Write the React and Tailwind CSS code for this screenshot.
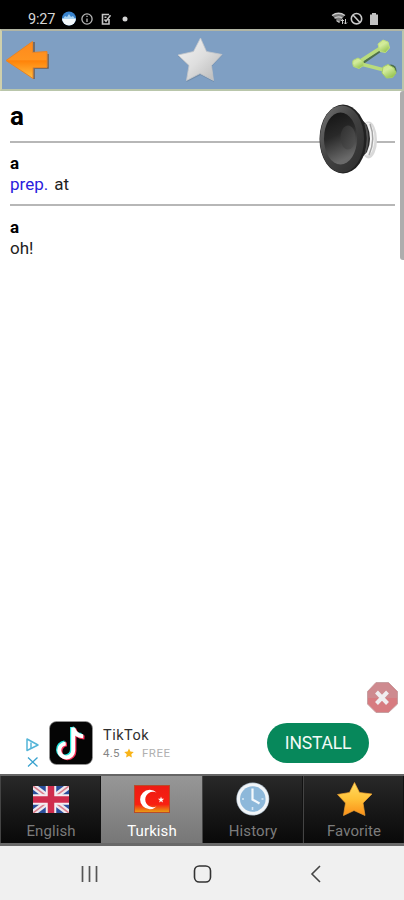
import { useState } from "react";

const BackArrow = () => (
  <svg width="46" height="42" viewBox="4 39 46 42">
    <defs>
      <linearGradient id="arrow" x1="0" y1="0" x2="0" y2="1">
        <stop offset="0" stopColor="#ff8a1c" />
        <stop offset="0.5" stopColor="#ff9420" />
        <stop offset="0.52" stopColor="#ff8208" />
        <stop offset="1" stopColor="#ffc044" />
      </linearGradient>
    </defs>
    <path d="M34 42v37M48 54v14H35" stroke="#6d5d50" strokeWidth="1.5" fill="none" />
    <path
      d="M6 60.5L32.5 41.5V52.5L47 51.5V67.5H33V78.5Z"
      fill="url(#arrow)"
      stroke="#e98425"
      strokeWidth="1"
      strokeLinejoin="round"
    />
  </svg>
);

const SilverStar = () => (
  <svg width="48" height="48" viewBox="177 36 48 48">
    <defs>
      <linearGradient id="silver" x1="0" y1="0" x2="1" y2="1">
        <stop offset="0" stopColor="#f4f4f4" />
        <stop offset="0.5" stopColor="#dedede" />
        <stop offset="1" stopColor="#b4b4b4" />
      </linearGradient>
    </defs>
    <path
      d="M202 39L208 52.5L223.5 55L213 66L215 82L201.5 75L187.5 82L190 66L179 56L195 52.5Z"
      fill="#627991"
      opacity="0.5"
    />
    <path
      d="M201.5 38L207.5 51.5L223 54.5L212.5 65.5L214.5 80.5L201 73.5L187.5 80.5L190 65.5L179 55L194.5 51.5Z"
      fill="url(#silver)"
      stroke="#c4c7ca"
      strokeWidth="0.8"
      strokeLinejoin="round"
    />
  </svg>
);

const ShareIcon = () => (
  <svg width="48" height="42" viewBox="350 39 48 42">
    <defs>
      <linearGradient id="green" x1="0" y1="0" x2="0.6" y2="1">
        <stop offset="0" stopColor="#cfe884" />
        <stop offset="0.45" stopColor="#d2eb9c" />
        <stop offset="1" stopColor="#98c552" />
      </linearGradient>
    </defs>
    <path d="M362 63.5L380 51" stroke="#4e6f4c" strokeWidth="2.5" />
    <ellipse cx="391" cy="70.5" rx="5.5" ry="6" fill="#4e6f4c" />
    <path d="M358 62.5L382 47M359 63.5L388 71" stroke="#b9dc7c" strokeWidth="3.6" />
    <path
      d="M378 44l5-4 5 2 1.5 6-4 4.5-5.5-1Z"
      fill="url(#green)"
      stroke="#bfe080"
      strokeLinejoin="round"
    />
    <path
      d="M353 60.5l5-2.5 5 3 .5 4.5-4.5 3-5.5-2-.8-3Z"
      fill="url(#green)"
      stroke="#b5d873"
      strokeLinejoin="round"
    />
    <path
      d="M383 67l5-2.5 6 3.5 2 5-3.5 4.5-6 .5-4.5-5Z"
      fill="url(#green)"
      stroke="#a9d065"
      strokeLinejoin="round"
    />
  </svg>
);

const Speaker = () => (
  <svg width="64" height="76" viewBox="316 101 64 76">
    <defs>
      <linearGradient id="rim" x1="0" y1="0" x2="1" y2="1">
        <stop offset="0" stopColor="#777" />
        <stop offset="0.45" stopColor="#434343" />
        <stop offset="1" stopColor="#2c2c2c" />
      </linearGradient>
      <linearGradient id="cone" x1="0" y1="0" x2="0.3" y2="1">
        <stop offset="0" stopColor="#121212" />
        <stop offset="0.5" stopColor="#292929" />
        <stop offset="1" stopColor="#6a6a6a" />
      </linearGradient>
      <linearGradient id="cap" x1="0" y1="0" x2="1" y2="1">
        <stop offset="0" stopColor="#2e2e2e" />
        <stop offset="1" stopColor="#555" />
      </linearGradient>
    </defs>
    <ellipse cx="368.5" cy="140" rx="8.5" ry="18.5" fill="#d9d9d9" />
    <ellipse cx="367" cy="139" rx="7.5" ry="16.5" fill="#f4f4f4" />
    <path d="M370 124Q376 139 369 155" fill="none" stroke="#a5a5a5" strokeWidth="1.5" />
    <path d="M357 114L367 125Q373 139 367 152L354 166Z" fill="#292929" />
    <path d="M365 124Q370 138 365 153" fill="none" stroke="#505050" strokeWidth="2" />
    <ellipse cx="343" cy="139" rx="23.5" ry="34.5" fill="#202020" />
    <ellipse cx="342" cy="139" rx="22" ry="33.5" fill="url(#rim)" />
    <ellipse cx="340.5" cy="138.5" rx="16.5" ry="26" fill="url(#cone)" />
    <ellipse cx="348" cy="137.5" rx="7.5" ry="12" fill="url(#cap)" />
  </svg>
);

const StatusBar = () => (
  <div className="flex h-[29px] items-center bg-black pt-[8px] pl-[28px] text-[14.5px] leading-none text-[#d6d6d6]">
    <span className="w-[28px] pt-[3px] tracking-[-0.2px]">9:27</span>
    <svg className="ml-[5px]" width="68" height="16" viewBox="61 11 68 16">
      <circle cx="69" cy="18.5" r="7" fill="#3883ce" />
      <path d="M62 18.5H76A7 7 0 0 1 62 18.5Z" fill="#f3f8fb" />
      <path d="M63 19l2-3 2 1 2-3 2 3 2-1 2 3Z" fill="#a7d3f3" />
      <circle cx="87" cy="19" r="5.1" fill="none" stroke="#b8b8b8" strokeWidth="1.3" />
      <path d="M87 18.5v3.5M87 15.8v1.3" stroke="#b8b8b8" strokeWidth="1.3" />
      <path
        d="M109 14.5H102.5V24H109V19M104.5 17.3h2M104.5 19.5l1.5 1.8 4.5-6"
        fill="none"
        stroke="#c6c6c6"
        strokeWidth="1.6"
      />
      <circle cx="125" cy="19" r="2.5" fill="#d4d4d4" />
    </svg>
    <svg className="mr-[23px] ml-auto" width="50" height="16" viewBox="331 11 50 16">
      <path d="M332 15.5Q338 11.5 344.5 15.5L339.5 22.5Z" fill="#777" />
      <path
        d="M332 15.5Q338.5 11 345 15.5M334.5 18.3Q338.5 15.5 342 18M336.5 20.5L339.5 22.5"
        fill="none"
        stroke="#ccc"
        strokeWidth="1.3"
      />
      <path
        d="M342.5 24V19.5M341 21l1.5-1.5 1.5 1.5M345.5 19v5M344 22.5l1.5 1.5 1.5-1.5"
        fill="none"
        stroke="#ccc"
      />
      <circle cx="356.5" cy="18.7" r="5.2" fill="none" stroke="#c8c8c8" strokeWidth="1.6" />
      <path d="M353 15L360 22.5" stroke="#c8c8c8" strokeWidth="1.6" />
      <path d="M370 14.5h2V13h4v1.5h2V25h-8Z" fill="#c2c2c2" />
    </svg>
  </div>
);

const TikTokLogo = () => (
  <svg width="44" height="44" viewBox="49 721 44 44">
    <rect x="49.5" y="721.5" width="43" height="43" rx="7" fill="#050505" stroke="#999" strokeWidth="0.7" />
    <g fill="none" strokeWidth="4">
      <path d="M72 727V749.5A7 7 0 1 1 64.500 742.5M72 727Q74 734.5 81.5 735" stroke="#25e6df" />
      <path d="M74.4 728.5V751.3A7 7 0 1 1 66.900 744.3M74.4 729Q76 737 84.5 737.5" stroke="#fa2f58" />
      <path d="M73.2 727.5V750.4A7 7 0 1 1 65.700 743.4M73.2 728Q75 735.8 83.2 736.3" stroke="#fff" />
    </g>
  </svg>
);

const AdBanner = () => (
  <div className="flex h-[57px] items-start bg-white">
    <svg className="mt-[20px] ml-[24px]" width="16" height="31" viewBox="24 738 16 31">
      <path d="M27 740V751.5L38 746Z" fill="none" stroke="#54b5d8" strokeWidth="1.5" strokeLinejoin="round" />
      <path d="M31 743.5v5.5" stroke="#54b5d8" strokeWidth="1.5" />
      <path d="M28 758.5l9.5 9M37.5 758.5l-9.5 9" stroke="#3aa2cf" strokeWidth="1.3" />
    </svg>
    <div className="mt-[4px] ml-[9px] h-[44px]">
      <TikTokLogo />
    </div>
    <div className="mt-[10px] ml-[10px]">
      <div className="text-[14.5px] leading-[17px] tracking-[0.5px] text-[#303030]">TikTok</div>
      <div className="mt-[2px] flex items-center text-[11.5px] leading-[14px] text-[#858585]">
        <span className="w-[17px] tracking-[0.2px]">4.5</span>
        <svg className="ml-[4px]" width="10" height="10" viewBox="0 0 24 24" fill="#f9b418">
          <path d="M12 1l3.4 7.5L23.5 9.5l-6 5.5L19 23l-7-4-7 4 1.5-8-6-5.5 8.1-1Z" />
        </svg>
        <span className="ml-[8px] tracking-[0.5px] text-[#b0b0b0]">FREE</span>
      </div>
    </div>
    <button className="mt-[6px] mr-[35px] ml-auto h-[40px] w-[102px] rounded-full bg-[#07885b] text-[17.5px] tracking-[-0.2px] text-[#f3faf6]">
      INSTALL
    </button>
  </div>
);

const UkFlag = () => (
  <svg width="38" height="38" viewBox="32 780 38 38">
    <svg x="33" y="786" width="36" height="27" viewBox="0 0 36 27">
      <path d="M0 0H36V27H0Z" fill="#2a4f9c" />
      <path d="M0 0L36 27M36 0L0 27" stroke="#eee9ef" strokeWidth="6" />
      <path d="M0 0L36 27M36 0L0 27" stroke="#dd7f8d" strokeWidth="1.6" />
      <path d="M18 0V27M0 13.5H36" stroke="#f4edf1" strokeWidth="10.5" />
      <path d="M18 0V27M0 13.5H36" stroke="#cf2c4d" strokeWidth="6.5" />
    </svg>
  </svg>
);

const TurkishFlag = () => (
  <svg width="38" height="38" viewBox="133 780 38 38">
    <defs>
      <linearGradient id="turkey" x1="0" y1="0" x2="0" y2="1">
        <stop offset="0" stopColor="#ed1b13" />
        <stop offset="0.7" stopColor="#f92012" />
        <stop offset="1" stopColor="#e7a514" />
      </linearGradient>
    </defs>
    <rect x="134.5" y="785.5" width="35" height="27" fill="url(#turkey)" stroke="#b84b2a" />
    <path d="M156.5 792.5A9.7 9.7 0 1 0 156.5 806.5A7.8 7.8 0 1 1 156.5 792.5Z" fill="#fff" />
    <path d="M161 796.5l.8 2.2 2.4.1-1.9 1.4.7 2.3-2-1.3-1.9 1.3.7-2.3-1.9-1.4 2.4-.1Z" fill="#fff" />
  </svg>
);

const ClockIcon = () => (
  <svg width="38" height="38" viewBox="234 780 38 38">
    <circle cx="252.8" cy="799" r="16.5" fill="#a9b8c5" />
    <circle cx="252.8" cy="799" r="15.8" fill="#f1f5f8" />
    <circle cx="252.8" cy="799" r="12.8" fill="#8db8da" />
    <path d="M252.5 788.5V799.5L259.5 803.5" fill="none" stroke="#f4f8fc" strokeWidth="2.2" />
    <path d="M252.5 807v3M242 799h2M261.5 799h2" stroke="#d8e7f3" strokeWidth="1.6" />
  </svg>
);

const GoldStar = () => (
  <svg width="38" height="38" viewBox="335 780 38 38">
    <defs>
      <linearGradient id="gold" x1="0" y1="0" x2="0" y2="1">
        <stop offset="0" stopColor="#ffdc63" />
        <stop offset="0.5" stopColor="#ffc137" />
        <stop offset="1" stopColor="#fb8f18" />
      </linearGradient>
    </defs>
    <path
      d="M354.5 782.5L359.5 792.5L372 794L363 803L365 815.5L354 810.5L343.5 815.5L345.5 803L337.5 794.5L349.5 792.5Z"
      fill="url(#gold)"
      stroke="#ee9f2f"
      strokeWidth="0.7"
      strokeLinejoin="round"
    />
  </svg>
);

const tabs = [
  { name: "English", Icon: UkFlag },
  { name: "Turkish", Icon: TurkishFlag },
  { name: "History", Icon: ClockIcon },
  { name: "Favorite", Icon: GoldStar },
];

const App = () => {
  const [tab, setTab] = useState("Turkish");

  return (
    <div className="flex h-[900px] w-[404px] flex-col overflow-hidden bg-white font-[Roboto,sans-serif] text-[#222]">
      <StatusBar />
      <header className="flex h-[62px] items-center justify-between border-2 border-t-[#b1b5a4] border-r-[#b9c6ab] border-b-[#b9c6ab] border-l-[#cfd0ac] bg-[#7f9fc3] pr-[4px] pl-[2px]">
        <BackArrow />
        <SilverStar />
        <ShareIcon />
      </header>

      <main className="relative flex-1 pr-[9px] pl-[10px]">
        <h1 className="h-[50px] pt-[10px] text-[26px] leading-[31px] font-bold text-black">a</h1>
        <hr className="h-[2px] border-0 bg-[#b7b7b7]" />
        <div className="h-[61px] pt-[10px] text-[17px] leading-[21px]">
          <b className="block text-black">a</b>
          <span className="text-[#2a20dd]">prep.</span>
          <span className="ml-[6px]">at</span>
        </div>
        <hr className="h-[2px] border-0 bg-[#b7b7b7]" />
        <div className="pt-[11px] text-[17px] leading-[21px]">
          <b className="block text-black">a</b>
          oh!
        </div>
        <button className="absolute top-[10px] right-[24px]">
          <Speaker />
        </button>
        <div className="absolute top-0 right-0 h-[169px] w-[4px] rounded-l-[3px] bg-[#adadad]" />
        <button className="absolute right-[6px] bottom-[4px]">
          <svg width="32" height="32" viewBox="366 681 32 32">
            <path
              d="M376 682.5h12.5L397.5 691.5V704L388.5 712.5H376L367.5 704V691.5Z"
              fill="#d77b80"
              stroke="#c7a0a2"
            />
            <path d="M368 698V692l8.5-9h11.5l9 9v6Z" fill="#cb9295" opacity="0.7" />
            <path d="M376.5 692l11 11.5M387.5 692l-11 11.5" stroke="#f0eef0" strokeWidth="4" />
          </svg>
        </button>
      </main>

      <AdBanner />

      <nav className="flex h-[72px] border-t-2 border-b-3 border-t-[#666] border-b-[#696969] bg-[#080808]">
        {tabs.map(({ name, Icon }) => (
          <button
            key={name}
            onClick={() => setTab(name)}
            className={
              name === tab
                ? "flex w-[101px] flex-col items-center bg-linear-to-b from-[#979797] to-[#777] pt-[4px] pl-px text-white"
                : "flex w-[101px] flex-col items-center border-x border-l-[#444] border-r-[#111] bg-linear-to-b from-[#292929] to-[#090909] pt-[4px] pl-px text-[#7c7c7c]"
            }
          >
            <Icon />
            <span className="mt-[3px] text-[15px] leading-[20px] tracking-[0.1px]">{name}</span>
          </button>
        ))}
      </nav>

      <footer className="flex h-[54px] items-center bg-[#f0f0f0] pt-px pl-[79px]">
        <svg width="20" height="20" viewBox="79 864 20 20">
          <path d="M82.5 866v16M89.5 866v16M96.5 866v16" stroke="#555" strokeWidth="1.7" />
        </svg>
        <svg className="ml-[93px]" width="22" height="20" viewBox="192 864 22 20">
          <rect x="194.5" y="866" width="16" height="16" rx="4.8" fill="none" stroke="#333" strokeWidth="1.6" />
        </svg>
        <svg className="ml-[95px]" width="14" height="20" viewBox="309 864 14 20">
          <path d="M320 866l-8 8 8 8" fill="none" stroke="#444" strokeWidth="1.6" />
        </svg>
      </footer>
    </div>
  );
};

export default App;
